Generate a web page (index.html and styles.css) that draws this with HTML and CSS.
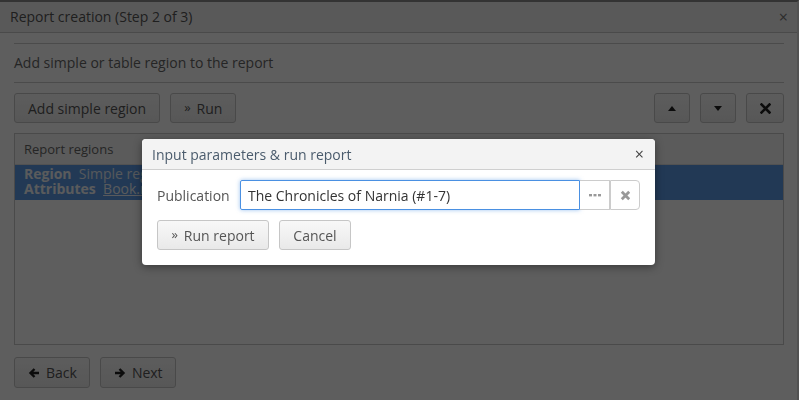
FILE: index.html
```html
<!DOCTYPE html>
<html>
<head>
<meta charset="utf-8">
<link rel="stylesheet" href="styles.css">
</head>
<body>
<div class="win">
  <div class="win-head">
    <span class="win-title">Report creation (Step 2 of 3)</span>
    <span class="win-close">×</span>
  </div>
  <div class="win-body">
    <div class="step-desc">Add simple or table region to the report</div>
    <div class="toolbar">
      <button class="btn">Add simple region</button>
      <button class="btn"><span class="raquo">»</span>Run</button>
      <span class="spacer"></span>
      <button class="btn icon-btn"><svg width="8" height="5" viewBox="0 0 8 5"><path d="M0 5 L4 0 L8 5Z" fill="#222"/></svg></button>
      <button class="btn icon-btn"><svg width="8" height="5" viewBox="0 0 8 5"><path d="M0 0 L4 5 L8 0Z" fill="#222"/></svg></button>
      <button class="btn icon-btn wide"><svg width="11" height="11" viewBox="0 0 11 11"><path d="M1.5 1.5 L9.5 9.5 M9.5 1.5 L1.5 9.5" stroke="#222" stroke-width="2.6" stroke-linecap="square"/></svg></button>
    </div>
    <div class="table">
      <div class="table-head">Report regions</div>
      <div class="row sel">
        <div><b>Region</b>&nbsp; Simple region</div>
        <div><b>Attributes</b>&nbsp; <u>Book.name, Book.author</u></div>
      </div>
    </div>
    <div class="footer">
      <button class="btn"><svg class="ico" width="12" height="12" viewBox="0 0 12 12"><path d="M11 6 H3 M6.5 2 L2.5 6 L6.5 10" stroke="#222" stroke-width="2.4" fill="none" stroke-linejoin="miter"/></svg>Back</button>
      <button class="btn"><svg class="ico" width="12" height="12" viewBox="0 0 12 12"><path d="M1 6 H9 M5.5 2 L9.5 6 L5.5 10" stroke="#222" stroke-width="2.4" fill="none"/></svg>Next</button>
    </div>
  </div>
</div>
<div class="overlay"></div>
<div class="modal">
  <div class="modal-head">
    <span class="modal-title">Input parameters &amp; run report</span>
    <span class="modal-close">×</span>
  </div>
  <div class="modal-body">
    <div class="field">
      <label class="lbl">Publication</label>
      <div class="picker">
        <div class="input">The Chronicles of Narnia (#1-7)</div>
        <span class="pbtn"><svg width="12" height="4" viewBox="0 0 12 4"><rect x="0" y="1" width="3" height="2.4" fill="#999"/><rect x="4.5" y="1" width="3" height="2.4" fill="#999"/><rect x="9" y="1" width="3" height="2.4" fill="#999"/></svg></span>
        <span class="pbtn last"><svg width="11" height="11" viewBox="0 0 11 11"><path d="M1.8 1.8 L9.2 9.2 M9.2 1.8 L1.8 9.2" stroke="#999" stroke-width="2.8"/></svg></span>
      </div>
    </div>
    <div class="actions">
      <button class="btn mbtn run"><span class="raquo">»</span>Run report</button>
      <button class="btn mbtn cancel">Cancel</button>
    </div>
  </div>
</div>
</body>
</html>
```

FILE: styles.css
```css
* { box-sizing: border-box; }
html, body { margin: 0; padding: 0; height: 100%; }
body {
  font-family: "Open Sans", "Liberation Sans", sans-serif;
  font-size: 14px;
  color: #555;
  background: #fff;
  overflow: hidden;
}
.win {
  height: 100%;
  border-top: 2px solid #8a8a8a;
  border-right: 2px solid #ddd;
  display: flex;
  flex-direction: column;
}
.win-head {
  height: 31px;
  background: #f2f2f2;
  border-bottom: 1px solid #c8c8c8;
  display: flex;
  align-items: center;
  justify-content: space-between;
  padding: 0 9px 1px 10px;
}
.win-title { font-size: 14px; color: #555; }
.win-close { font-size: 16px; color: #777; line-height: 1; }
.win-body {
  padding: 10px 13px 0 14px;
  display: flex;
  flex-direction: column;
}
.step-desc {
  border-top: 1px solid #ccc;
  border-bottom: 1px solid #ccc;
  height: 40px;
  display: flex;
  align-items: center;
  font-size: 14px;
  color: #666;
  padding-bottom: 1px;
}
.toolbar {
  display: flex;
  align-items: center;
  gap: 10px;
  margin-top: 10px;
}
.spacer { flex: 1; }
.btn {
  font-family: "Open Sans", "Liberation Sans", sans-serif;
  font-size: 14px;
  color: #555;
  height: 30px;
  padding: 0 13px;
  border: 1px solid #c6c6c6;
  border-radius: 3px;
  background: linear-gradient(#fbfbfb, #ececec);
  display: inline-flex;
  align-items: center;
  justify-content: center;
  margin: 0;
}
.raquo { font-size: 13px; margin-right: 6px; position: relative; top: -1px; }
.icon-btn { width: 36px; padding: 0; }
.icon-btn.wide { width: 38px; }
.ico { margin-right: 6px; }
.table {
  margin-top: 10px;
  height: 212px;
  border: 1px solid #c8c8c8;
  background: #fff;
}
.table-head {
  height: 31px;
  background: #f6f6f6;
  border-bottom: 1px solid #ddd;
  padding: 0 9px;
  display: flex;
  align-items: center;
  font-size: 13px;
  color: #666;
}
.row.sel {
  background: #5c9ce6;
  color: #e8eef6;
  padding: 1px 9px 4px;
  font-size: 14px;
  line-height: 15px;
}
.row.sel b { color: #f4f6fa; }
.row.sel u { color: #f0f4fa; }
.footer {
  display: flex;
  gap: 10px;
  margin-top: 12px;
}
.footer .btn { height: 31px; padding: 0 12px 0 13px; }
.overlay {
  position: fixed;
  inset: 0;
  background: rgba(0, 0, 0, 0.63);
}
.modal {
  position: absolute;
  left: 142px;
  top: 139px;
  width: 513px;
  height: 126px;
  background: #fff;
  border-radius: 4px;
  box-shadow: 0 2px 8px rgba(0,0,0,0.4);
  overflow: hidden;
}
.modal-head {
  height: 31px;
  background: #f3f3f3;
  border-bottom: 1px solid #cfcfcf;
  display: flex;
  align-items: center;
  justify-content: space-between;
  padding: 0 11px 0 10px;
}
.modal-title { font-size: 14px; color: #4a5b6c; }
.modal-close { font-size: 16px; color: #444; line-height: 1; }
.modal-body { padding: 10px 15px 0 15px; }
.field { display: flex; align-items: center; }
.lbl { font-size: 14px; color: #555; width: 83px; }
.picker { display: flex; height: 30px; }
.input {
  width: 340px;
  height: 30px;
  border: 1px solid #4a90e2;
  border-radius: 2px 0 0 2px;
  box-shadow: 0 0 4px rgba(74, 144, 226, 0.55);
  display: flex;
  align-items: center;
  padding: 0 7px;
  font-size: 14px;
  color: #333;
}
.pbtn {
  width: 30px;
  height: 30px;
  border: 1px solid #ccc;
  border-left: none;
  display: flex;
  align-items: center;
  justify-content: center;
  background: #fff;
}
.pbtn.last { border-left: 1px solid #ccc; border-radius: 0 4px 4px 0; }
.actions { display: flex; gap: 10px; margin-top: 10px; }
.mbtn { height: 30px; background: linear-gradient(#f8f8f8, #e9e9e9); }
.mbtn.run { width: 112px; padding: 0; }
.mbtn.cancel { width: 72px; padding: 0; }
```
